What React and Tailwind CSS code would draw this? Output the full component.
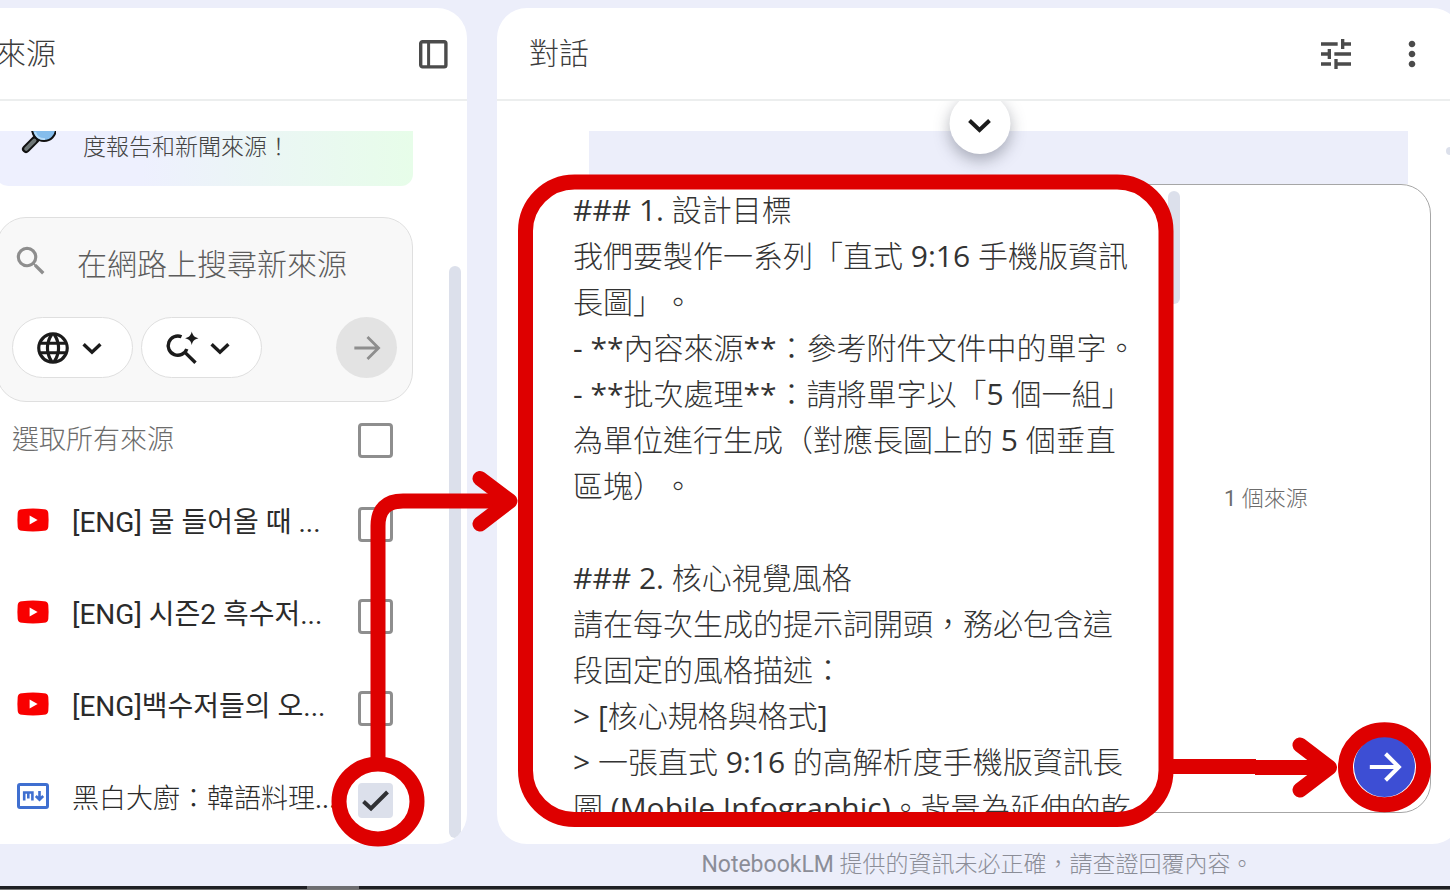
import { useState } from "react";
import { MdLanguage, MdMoreVert, MdSearch, MdTune } from "react-icons/md";

const prompt = `### 1. 設計目標
我們要製作一系列「直式 9:16 手機版資訊長圖」。
- **內容來源**：參考附件文件中的單字。
- **批次處理**：請將單字以「5 個一組」為單位進行生成（對應長圖上的 5 個垂直區塊）。

### 2. 核心視覺風格
請在每次生成的提示詞開頭，務必包含這段固定的風格描述：
> [核心規格與格式]
> 一張直式 9:16 的高解析度手機版資訊長圖 (Mobile Infographic)。背景為延伸的乾淨`;

const sources = [
  { id: "s1", kind: "video", title: "[ENG] 물 들어올 때 ...", checked: false },
  { id: "s2", kind: "video", title: "[ENG] 시즌2 흑수저...", checked: false },
  { id: "s3", kind: "video", title: "[ENG]백수저들의 오...", checked: false },
  { id: "s4", kind: "markdown", title: "黑白大廚：韓語料理...", checked: true },
];

function PanelIcon() {
  return (
    <svg className="size-8" viewBox="0 0 32 32" fill="none" stroke="#4b4b4b" strokeWidth="3.4" aria-hidden="true">
      <rect x="3.7" y="3.7" width="25.2" height="25.2" rx="1.8" />
      <path d="M11.6 4v25" strokeWidth="3" />
    </svg>
  );
}

function Chevron() {
  return (
    <svg className="h-6 w-6" viewBox="0 0 24 24" fill="none" stroke="#1b1b1b" strokeWidth="3.4" aria-hidden="true">
      <path d="M3.6 8.2 12 16.2l8.4-8" />
    </svg>
  );
}

function Arrow({ className }) {
  return (
    <svg className={className} viewBox="0 0 32 32" fill="none" stroke="currentColor" aria-hidden="true">
      <path d="M2.5 16h26M16.500 4.200 28.300 16 16.500 27.800" />
    </svg>
  );
}

function ResearchIcon() {
  return (
    <svg className="size-9" viewBox="0 0 36 36" fill="none" stroke="#1b1b1b" strokeWidth="3.4" aria-hidden="true">
      <path d="M17.500 6.800A9.600 9.600 0 1 0 22.800 19M20.200 21.600 31.500 32.800" />
      <path d="M27.800 1.500c1 4 2.500 5.600 6.700 6.700-4.200 1.100-5.700 2.700-6.700 6.700-1-4-2.500-5.600-6.700-6.700 4.200-1.100 5.700-2.700 6.700-6.700Z" fill="#1b1b1b" stroke="none" />
    </svg>
  );
}

function Magnifier() {
  return (
    <svg className="h-6 w-9 shrink-0 self-start" viewBox="0 0 36 24" aria-hidden="true">
      <path d="M15.500 8.500 6 18" stroke="#111" strokeWidth="8" strokeLinecap="round" />
      <path d="M14.500 9.500 6.200 17.800" stroke="#6e7676" strokeWidth="4" strokeLinecap="round" />
      <circle cx="24" cy="-2" r="12" fill="#85bdec" stroke="#111" strokeWidth="2" />
      <path d="M15 1c1.500 5 5 7.500 10 7" fill="none" stroke="#b7dcf8" strokeWidth="2" />
    </svg>
  );
}

function VideoIcon() {
  return (
    <svg className="h-6 w-8" viewBox="0 0 32 24" aria-hidden="true">
      <path d="M5 1.200Q16 0 27 1.200 31 1.500 31.300 5q.6 7 0 14-.3 3.500-4.300 3.800-11 1.200-22 0Q1 22.500.7 19q-.6-7 0-14Q1 1.500 5 1.200Z" fill="#f90000" />
      <path d="M12.600 7.400v9.200l8-4.600Z" fill="#fff" />
    </svg>
  );
}

function MarkdownIcon() {
  return (
    <svg className="h-[26px] w-8" viewBox="0 0 32 26" fill="none" stroke="#3f6fd0" aria-hidden="true">
      <rect x="1.500" y="1.500" width="29" height="23" rx="1.500" strokeWidth="3" />
      <path d="M7.200 17.500V9.500h8.200v8M11.300 9.500v6" strokeWidth="2.600" />
      <path d="M22.500 8v9M18.800 13 22.500 16.700l3.700-3.700" strokeWidth="2.600" />
    </svg>
  );
}

function Checkbox({ id, checked, onChange }) {
  return (
    <span className="relative block size-[35px] shrink-0">
      <input
        id={id}
        type="checkbox"
        checked={checked}
        onChange={onChange}
        className="block size-[35px] appearance-none rounded-[4px] border-[3px] border-[#8e8e8e] bg-white checked:border-[#dce0eb] checked:bg-[#dce0eb]"
      />
      {checked && (
        <svg className="pointer-events-none absolute inset-0 size-[35px]" viewBox="0 0 35 35" fill="none" stroke="#303134" strokeWidth="4" aria-hidden="true">
          <path d="M5.500 18.500 13 25.500 29.500 9" />
        </svg>
      )}
    </span>
  );
}

function Sources() {
  const [items, setItems] = useState(sources);
  const toggle = (id) => setItems(items.map((s) => (s.id === id ? { ...s, checked: !s.checked } : s)));
  return (
    <aside className="relative -ml-[38px] flex w-[505px] shrink-0 flex-col overflow-hidden rounded-[30px] bg-white">
      <header className="flex h-[93px] shrink-0 items-center justify-between border-b-2 border-[#eceeee] pr-[18px] pl-[34px]">
        <h2 className="text-[30px] leading-10 text-[#3c3c3c]">來源</h2>
        <button type="button" aria-label="收合來源面板"><PanelIcon /></button>
      </header>
      <div className="-mb-1 flex flex-col pt-[30px] pr-[54px] pl-[34px]">
        <div className="flex h-[55px] overflow-hidden rounded-b-xl bg-linear-to-r from-[#eef0fe] from-35% to-[#e7fde9] pl-6">
          <Magnifier />
          <p className="pl-[27px] text-[23px] leading-[34px] text-[#444]">度報告和新聞來源！</p>
        </div>
        <form className="mt-[31px] rounded-[30px] border border-[#dfdfdf] bg-[#f8f8f8] px-[15px] pt-[21px] pb-[23px]" onSubmit={(e) => e.preventDefault()}>
          <div className="flex h-[52px] items-center">
            <MdSearch className="-mt-2 size-[38px] shrink-0 text-[#8e8e8e]" aria-hidden="true" />
            <input
              aria-label="在網路上搜尋新來源"
              placeholder="在網路上搜尋新來源"
              className="ml-[27px] min-w-0 flex-1 bg-transparent text-[30px] leading-10 placeholder:text-[#5c5c5c] placeholder:opacity-100"
            />
          </div>
          <div className="mt-[26px] flex items-center gap-2">
            <button type="button" aria-label="網路" className="flex h-[61px] w-[121px] items-center justify-center gap-2 rounded-full border border-[#dfdfdf] bg-white pr-2">
              <MdLanguage className="size-[38px] text-[#1b1b1b]" />
              <Chevron />
            </button>
            <button type="button" aria-label="快速研究" className="flex h-[61px] w-[121px] items-center justify-center gap-2 rounded-full border border-[#dfdfdf] bg-white pr-2">
              <ResearchIcon />
              <Chevron />
            </button>
            <button type="submit" aria-label="搜尋" className="ml-auto flex size-[61px] items-center justify-center rounded-full bg-[#e3e3e3] text-[#8e8e8e]">
              <Arrow className="size-[30px] stroke-[3px]" />
            </button>
          </div>
        </form>
        <div className="flex h-[76px] items-center justify-between pr-5 pl-4">
          <label htmlFor="all" className="text-[27px] leading-9 text-[#6c6c6c]">選取所有來源</label>
          <Checkbox id="all" checked={items.every((s) => s.checked)} onChange={(e) => setItems(items.map((s) => ({ ...s, checked: e.target.checked })))} />
        </div>
        <ul>
          {items.map((s) => (
            <li key={s.id} className="flex h-[92px] items-center pr-5 pl-[21px]">
              <span className="-mt-2">{s.kind === "video" ? <VideoIcon /> : <MarkdownIcon />}</span>
              <label
                htmlFor={s.id}
                lang={s.kind === "video" ? "ko" : "zh-Hant"}
                className={
                  s.kind === "video"
                    ? "min-w-0 flex-1 pb-0.5 pl-[23px] font-[Roboto,'Noto_Sans_CJK_KR',sans-serif] text-[28px] leading-9 whitespace-nowrap text-[#2b2b2b]"
                    : "min-w-0 flex-1 pb-0.5 pl-[23px] text-[27px] leading-9 whitespace-nowrap text-[#2b2b2b]"
                }
              >
                {s.title}
              </label>
              <Checkbox id={s.id} checked={s.checked} onChange={() => toggle(s.id)} />
            </li>
          ))}
        </ul>
      </div>
      <div className="absolute top-[258px] right-1.5 bottom-1.5 w-3 rounded-full bg-[#dce0eb]" />
    </aside>
  );
}

function Chat() {
  const [text, setText] = useState(prompt);
  return (
    <main className="-mr-3 flex min-w-0 flex-1 flex-col overflow-hidden rounded-[30px] bg-white">
      <header className="flex h-[93px] shrink-0 items-center border-b-2 border-[#eceeee] pr-[30px] pl-8">
        <h2 className="flex-1 text-[30px] leading-10 text-[#3c3c3c]">對話</h2>
        <button type="button" aria-label="設定"><MdTune className="size-10 text-[#4b4b4b]" /></button>
        <button type="button" aria-label="更多" className="ml-9"><MdMoreVert className="size-10 text-[#4b4b4b]" /></button>
      </header>
      <div className="relative flex flex-1 flex-col overflow-hidden pt-[30px]">
        <div className="mr-[54px] ml-[92px] h-[53px] bg-[#eceefa]" />
        <button type="button" aria-label="捲動到底部" className="absolute -top-2 left-1/2 flex size-[61px] -translate-x-1/2 items-center justify-center rounded-full bg-white shadow-[0_6px_16px_rgba(60,64,80,0.4)]">
          <svg className="size-7" viewBox="0 0 28 28" fill="none" stroke="#1b1b1b" strokeWidth="4" aria-hidden="true">
            <path d="M4 10.500 14 20l10-9.500" />
          </svg>
        </button>
        <div className="absolute top-[46px] right-2 size-2 rounded-full bg-[#dce0eb]" />
        <form className="relative mr-[31px] mb-[31px] ml-8 flex flex-1 rounded-[30px] border border-[#a6a6a6] bg-white pr-[15px] pl-[43px]" onSubmit={(e) => e.preventDefault()}>
          <textarea
            aria-label="訊息"
            value={text}
            onChange={(e) => setText(e.target.value)}
            className="w-[565px] shrink-0 resize-none overflow-hidden bg-transparent pt-0.5 font-['Open_Sans','Noto_Sans_CJK_TC_Light','Noto_Sans_CJK_TC',sans-serif] text-[30px] leading-[46px] text-[#333] outline-none [text-spacing-trim:space-all]"
          />
          <div className="mt-1.5 ml-[30px] h-[113px] w-3 shrink-0 rounded-full bg-[#dce0eb]" />
          <p className="flex-1 self-center pl-11 text-[22px] leading-8 whitespace-nowrap text-[#6c6c6c]">1 個來源</p>
          <button type="submit" aria-label="送出" className="mb-[15px] flex size-[61px] shrink-0 items-center justify-center self-end rounded-full bg-[#3d4ed4] text-white">
            <Arrow className="size-9 stroke-[3.600px]" />
          </button>
        </form>
      </div>
    </main>
  );
}

function Annotations() {
  return (
    <svg className="pointer-events-none absolute top-0 left-0 h-[890px] w-[1450px]" viewBox="0 0 1450 890" fill="none" stroke="#de0000" strokeWidth="15" aria-hidden="true">
      <rect x="525.500" y="182" width="640.500" height="637.500" rx="49" />
      <path d="M378 757V526q0-25 25-25h104" />
      <path d="M480 478.500 510 501 480 524" strokeLinecap="round" strokeLinejoin="round" />
      <ellipse cx="378" cy="801.500" rx="39" ry="37.500" />
      <path d="M1173 766.500h83M1255 767.500h72" />
      <path d="M1300 745 1329.500 767.500 1300 790" strokeLinecap="round" strokeLinejoin="round" />
      <ellipse cx="1384.500" cy="767.300" rx="39" ry="37.500" />
    </svg>
  );
}

export default function App() {
  return (
    <div lang="zh-Hant" className="relative flex min-h-screen flex-col overflow-hidden bg-[#eceefa] pt-2 font-[Roboto,'Noto_Sans_CJK_TC_Light','Noto_Sans_CJK_TC','Noto_Sans_CJK_KR',sans-serif]">
      <div className="flex flex-1 gap-[30px]">
        <Sources />
        <Chat />
      </div>
      <footer className="shrink-0">
        <p className="pl-[505px] text-center text-[23px] leading-[42px] text-[#8b8d97]">NotebookLM 提供的資訊未必正確，請查證回覆內容。</p>
        <div className="flex h-1 border-b border-[#777] bg-[#1f2024] pl-[307px]">
          <div className="w-[52px] bg-[#6d6d70]" />
        </div>
      </footer>
      <Annotations />
    </div>
  );
}
